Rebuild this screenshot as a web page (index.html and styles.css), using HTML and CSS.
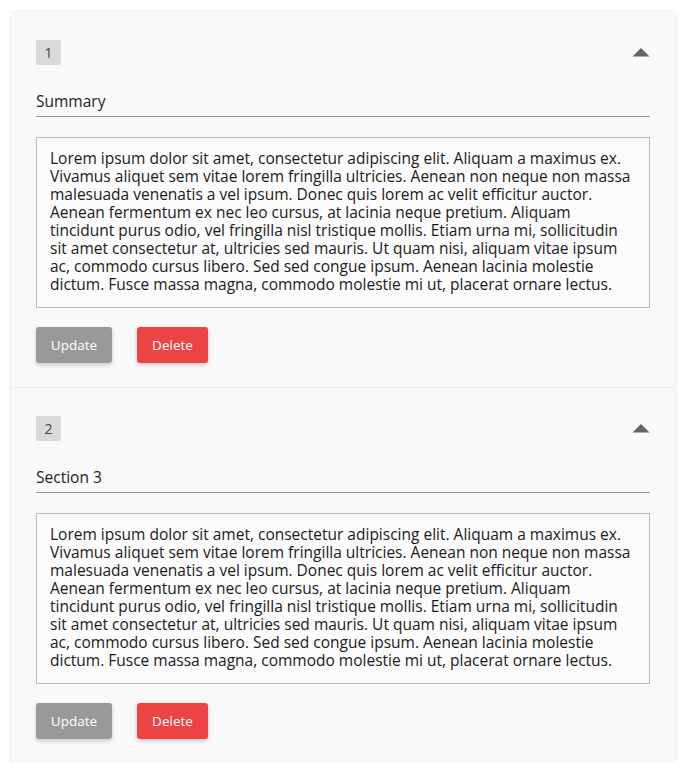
FILE: index.html
```html
<!DOCTYPE html>
<html>
<head>
<meta charset="utf-8">
<link rel="stylesheet" href="styles.css">
</head>
<body>
<div class="page">
  <div class="card">
    <section class="item">
      <div class="item-head">
        <span class="badge">1</span>
        <span class="toggle"><svg width="18" height="10" viewBox="0 0 18 10"><path d="M9 1 L17.5 9.5 L0.5 9.5 Z" fill="#666"/></svg></span>
      </div>
      <div class="title">Summary</div>
      <div class="body-text">Lorem ipsum dolor sit amet, consectetur adipiscing elit. Aliquam a maximus ex. Vivamus aliquet sem vitae lorem fringilla ultricies. Aenean non neque non massa malesuada venenatis a vel ipsum. Donec quis lorem ac velit efficitur auctor. Aenean fermentum ex nec leo cursus, at lacinia neque pretium. Aliquam tincidunt purus odio, vel fringilla nisl tristique mollis. Etiam urna mi, sollicitudin sit amet consectetur at, ultricies sed mauris. Ut quam nisi, aliquam vitae ipsum ac, commodo cursus libero. Sed sed congue ipsum. Aenean lacinia molestie dictum. Fusce massa magna, commodo molestie mi ut, placerat ornare lectus.</div>
      <div class="actions">
        <button class="btn btn-update">Update</button>
        <button class="btn btn-delete">Delete</button>
      </div>
    </section>
    <section class="item">
      <div class="item-head">
        <span class="badge">2</span>
        <span class="toggle"><svg width="18" height="10" viewBox="0 0 18 10"><path d="M9 1 L17.5 9.5 L0.5 9.5 Z" fill="#666"/></svg></span>
      </div>
      <div class="title">Section 3</div>
      <div class="body-text">Lorem ipsum dolor sit amet, consectetur adipiscing elit. Aliquam a maximus ex. Vivamus aliquet sem vitae lorem fringilla ultricies. Aenean non neque non massa malesuada venenatis a vel ipsum. Donec quis lorem ac velit efficitur auctor. Aenean fermentum ex nec leo cursus, at lacinia neque pretium. Aliquam tincidunt purus odio, vel fringilla nisl tristique mollis. Etiam urna mi, sollicitudin sit amet consectetur at, ultricies sed mauris. Ut quam nisi, aliquam vitae ipsum ac, commodo cursus libero. Sed sed congue ipsum. Aenean lacinia molestie dictum. Fusce massa magna, commodo molestie mi ut, placerat ornare lectus.</div>
      <div class="actions">
        <button class="btn btn-update">Update</button>
        <button class="btn btn-delete">Delete</button>
      </div>
    </section>
  </div>
</div>
</body>
</html>
```

FILE: styles.css
```css
html, body {
  margin: 0;
  padding: 0;
  background: #ffffff;
}
body {
  font-family: "Open Sans", "Noto Sans", sans-serif;
  color: #222;
}
.page {
  padding: 12px 13px 0 11px;
}
.card {
  background: #f9f9f9;
  box-shadow: 0 0 4px rgba(0,0,0,0.12);
}
.item {
  padding: 28px 25px 24px 25px;
  border-top: 1px solid #ececec;
}
.item:first-child {
  border-top: none;
}
.item-head {
  display: flex;
  justify-content: space-between;
  align-items: center;
  height: 25px;
}
.badge {
  width: 25px;
  height: 25px;
  background: #d9d9d9;
  border-radius: 2px;
  display: flex;
  align-items: center;
  justify-content: center;
  font-size: 14px;
  color: #444;
}
.toggle {
  display: flex;
  width: 18px;
  height: 10px;
  margin-top: -2px;
}
.title {
  margin-top: 25px;
  font-size: 15.5px;
  line-height: 22px;
  color: #222;
  padding-bottom: 4px;
  border-bottom: 1px solid #9a9a9a;
}
.body-text {
  margin-top: 20px;
  border: 1px solid #bbb;
  background: #fbfbfb;
  padding: 11px 13px 14px 13px;
  font-size: 15.5px;
  line-height: 18px;
  color: #1a1a1a;
}
.actions {
  display: flex;
  gap: 25px;
  margin-top: 19px;
}
.btn {
  height: 36px;
  border: none;
  border-radius: 3px;
  color: #fff;
  font-family: "Open Sans", sans-serif;
  font-size: 13.5px;
  padding: 0;
  box-shadow: 0 2px 4px rgba(0,0,0,0.2);
}
.btn-update {
  background: #999999;
  width: 76px;
}
.btn-delete {
  background: #ec4444;
  width: 71px;
}
```
